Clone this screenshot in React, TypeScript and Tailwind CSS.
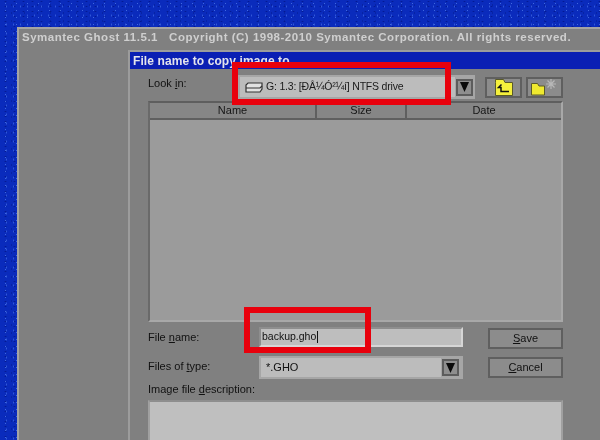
function DownArrow() {
  return (
    <div className="flex h-[17px] w-[17px] items-center justify-center border-2 border-[#5c5c5c] bg-[#8e8e8e]">
      <svg width="9" height="10" viewBox="0 0 9 10">
        <path d="M0 0h9L4.5 10z" fill="#0a0a0a" />
      </svg>
    </div>
  );
}

function DriveIcon() {
  return (
    <svg width="18" height="11" viewBox="0 0 18 11" className="shrink-0">
      <path d="M3 1h14v6l-2 3H1V3z" fill="#e2e2e2" stroke="#333" strokeWidth="1.2" />
      <path d="M1 6h14l2-2" fill="none" stroke="#333" strokeWidth="1.2" />
    </svg>
  );
}

function UpFolderIcon() {
  return (
    <svg width="18" height="17" viewBox="0 0 18 17">
      <path d="M.5 3.500V.5h8L10 3.500h7.500v13H.5z" fill="#f5f03c" stroke="#5a5a28" />
      <path d="M6.500 5.500 3.500 8.500h2.500V12.500h8" fill="none" stroke="#111" strokeWidth="1.500" />
    </svg>
  );
}

function NewFolderIcon() {
  return (
    <svg width="30" height="18" viewBox="0 0 30 18">
      <path d="M1.500 8V5.500h6L9 8h5.500v9H1.500z" fill="#efe92f" stroke="#5a5a28" />
      <path d="M21 1v10M16 6h10M17.500 2.500l7 7M24.500 2.500l-7 7" stroke="#b8b8b8" strokeWidth="1.200" />
    </svg>
  );
}

function Button({ children }: { children: React.ReactNode }) {
  return (
    <div className="flex h-[21px] w-[75px] items-center justify-center border-2 border-[#5f5f5f] bg-[#8c8c8c] text-[11px] text-[#111]">
      {children}
    </div>
  );
}

export default function App() {
  return (
    <div className="relative h-[440px] w-[600px] overflow-hidden bg-[#0a2bbc] bg-[radial-gradient(#3f68df_0.5px,transparent_1px),radial-gradient(#3158d8_0.5px,transparent_1px),radial-gradient(#041a94_0.7px,transparent_1.2px),radial-gradient(#06209f_0.7px,transparent_1.2px)] bg-size-[11px_7px,7px_9px,9px_5px,13px_8px] bg-position-[0_0,3px_2px,1px_4px,5px_1px] pl-[17px] pt-[27px] font-['Liberation_Sans',sans-serif]">
      <div className="h-[413px] w-[583px] overflow-hidden border-l-2 border-t-2 border-[#a4a4a4] bg-[#808080] blur-[0.5px]">
        <div className="flex h-[21px] items-center whitespace-pre pb-[4px] pl-[3px] text-[11.5px] font-bold tracking-[0.51px] text-[#cfcfcf]">
          Symantec Ghost 11.5.1   Copyright (C) 1998-2010 Symantec Corporation. All rights reserved.
        </div>

        <div className="ml-[109px] h-[392px] border-l-2 border-t-2 border-[#9c9c9c]">
          <div className="flex h-[17px] items-center bg-[#0a1fb4] pl-[3px] text-[12px] font-bold tracking-[0.1px] text-[#e4e4ec]">
            File name to copy image to
          </div>

          <div className="pl-[18px] pr-[37px] pt-[6px]">
            <div className="flex h-[24px] items-center">
              <span className="w-[90px] pb-[7px] text-[11px] text-[#111]">
                Look <u>i</u>n:
              </span>
              <div className="flex h-[24px] w-[237px] items-center border-2 border-[#a6a6a6] bg-[#a6a6a6]">
                <div className="flex h-[20px] w-[216px] items-center gap-[3px] bg-[#bcbcbc] pl-[5px] text-[10.5px] tracking-[-0.2px] text-[#1a1a1a]">
                  <DriveIcon />
                  <span className="whitespace-pre">G: 1.3: [ÐÂ¼Ó²¼í] NTFS drive</span>
                </div>
                <div className="ml-[1px]">
                  <DownArrow />
                </div>
              </div>
              <div className="ml-[10px] flex h-[21px] w-[37px] items-center justify-center border-2 border-[#5f5f5f] bg-[#8c8c8c]">
                <UpFolderIcon />
              </div>
              <div className="ml-[4px] flex h-[21px] w-[37px] items-center justify-center border-2 border-[#5f5f5f] bg-[#8c8c8c]">
                <NewFolderIcon />
              </div>
            </div>

            <div className="mt-[2px] h-[221px] w-[415px] border-2 border-t-[#5e5e5e] border-l-[#6a6a6a] border-r-[#a8a8a8] border-b-[#a8a8a8] bg-[#9b9b9b]">
              <div className="flex h-[17px] border-b-2 border-[#5f5f5f] bg-[#868686] text-[11px] text-[#161616]">
                <div className="flex w-[167px] items-center justify-center border-r-2 border-[#5f5f5f]">Name</div>
                <div className="flex w-[90px] items-center justify-center border-r-2 border-[#5f5f5f]">Size</div>
                <div className="flex flex-1 items-center justify-center">Date</div>
              </div>
            </div>

            <div className="mt-[6px] flex h-[21px] items-start">
              <span className="w-[111px] pt-[1px] text-[11px] text-[#111]">
                File <u>n</u>ame:
              </span>
              <div className="-mt-px flex h-[20px] w-[204px] items-center border-2 border-[#d6d6d6] border-t-[#8e8e8e] border-l-[#8e8e8e] bg-[#bebebe] pl-[1px] text-[10.5px] text-[#111]">
                backup.gho<span className="ml-[1px] h-[12px] w-px bg-[#111]" />
              </div>
              <div className="ml-[25px]">
                <Button>
                  <span>
                    <u>S</u>ave
                  </span>
                </Button>
              </div>
            </div>

            <div className="mt-[7px] flex h-[23px] items-center">
              <span className="w-[111px] pb-[3px] text-[11px] text-[#111]">
                Files of <u>t</u>ype:
              </span>
              <div className="flex h-[23px] w-[204px] items-center border-2 border-[#a6a6a6] bg-[#a6a6a6]">
                <div className="flex h-[19px] w-[180px] items-center bg-[#bcbcbc] pl-[5px] text-[11px] text-[#111]">
                  *.GHO
                </div>
                <div className="ml-[1px]">
                  <DownArrow />
                </div>
              </div>
              <div className="ml-[25px]">
                <Button>
                  <span>
                    <u>C</u>ancel
                  </span>
                </Button>
              </div>
            </div>

            <div className="mt-[3px] h-[18px] text-[11px] leading-[14px] text-[#111]">
              Image file <u>d</u>escription:
            </div>
            <div className="h-[60px] w-[415px] border-2 border-[#a0a0a0] border-t-[#8e8e8e] bg-[#bfbfbf]" />
          </div>
        </div>
      </div>

      <div className="absolute left-[232px] top-[62px] h-[43px] w-[219px] border-[6px] border-[#e8000c]" />
      <div className="absolute left-[244px] top-[307px] h-[46px] w-[127px] border-[6px] border-[#e8000c]" />
    </div>
  );
}
